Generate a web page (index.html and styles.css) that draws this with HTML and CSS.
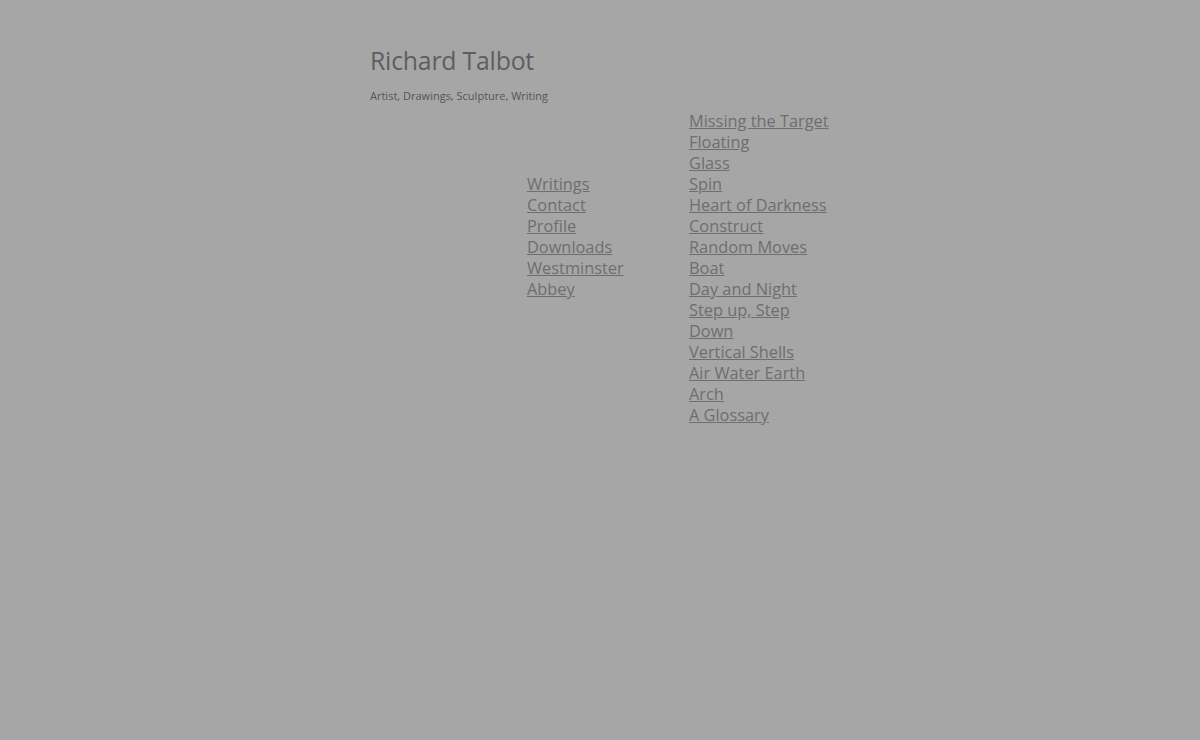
FILE: index.html
```html
<!DOCTYPE html>
<html>
<head>
<meta charset="utf-8">
<title>Richard Talbot</title>
<link rel="stylesheet" href="styles.css">
</head>
<body>
<div class="page">
  <header class="header">
    <h1 class="title">Richard Talbot</h1>
    <p class="tagline">Artist, Drawings, Sculpture, Writing</p>
  </header>
  <div class="menus">
    <div class="spacer"></div>
    <ul class="menu menu-left">
      <li><a href="#">Writings</a></li>
      <li><a href="#">Contact</a></li>
      <li><a href="#">Profile</a></li>
      <li><a href="#">Downloads</a></li>
      <li><a href="#">Westminster Abbey</a></li>
    </ul>
    <ul class="menu menu-right">
      <li><a href="#">Missing the Target</a></li>
      <li><a href="#">Floating</a></li>
      <li><a href="#">Glass</a></li>
      <li><a href="#">Spin</a></li>
      <li><a href="#">Heart of Darkness</a></li>
      <li><a href="#">Construct</a></li>
      <li><a href="#">Random Moves</a></li>
      <li><a href="#">Boat</a></li>
      <li><a href="#">Day and Night</a></li>
      <li><a href="#">Step up, Step Down</a></li>
      <li><a href="#">Vertical Shells</a></li>
      <li><a href="#">Air Water Earth</a></li>
      <li><a href="#">Arch</a></li>
      <li><a href="#">A Glossary</a></li>
    </ul>
  </div>
</div>
</body>
</html>
```

FILE: styles.css
```css
html, body {
  margin: 0;
  padding: 0;
  background: #a6a6a6;
}
body {
  font-family: "Open Sans", "Noto Sans", sans-serif;
  color: #5c5c5c;
}
.page {
  width: 460px;
  margin: 0 auto;
  padding-top: 43px;
}
.header {
  display: flex;
  flex-direction: column;
}
.title {
  margin: 0;
  font-weight: normal;
  font-size: 24.8px;
  line-height: 34px;
  color: #5e5e5e;
  letter-spacing: -0.2px;
}
.tagline {
  margin: 11px 0 0 0;
  font-size: 11px;
  line-height: 16px;
  color: #555;
}
.menus {
  display: flex;
  margin-top: 7px;
}
.spacer {
  width: 157px;
  flex: none;
}
.menu {
  list-style: none;
  margin: 0;
  padding: 0;
  font-size: 16.35px;
  line-height: 21px;
}
.menu a {
  color: #6e6e6e;
  text-decoration: underline;
}
.menu-left {
  width: 126px;
  margin-top: 63px;
  margin-right: 36px;
  flex: none;
}
.menu-right {
  width: 143px;
  flex: none;
}
```
